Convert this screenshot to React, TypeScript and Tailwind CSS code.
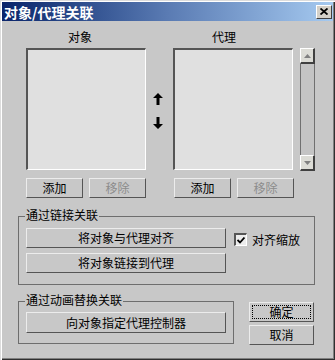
const font = { fontFamily: '"Noto Sans CJK SC", "Noto Sans", sans-serif' }

function Btn({ w, h, label, disabled, focus }: { w: string; h: string; label: string; disabled?: boolean; focus?: boolean }) {
  return (
    <div
      className={`${w} ${h} relative flex items-center justify-center border-t border-l border-t-[#ececec] border-l-[#ececec] border-b border-r border-b-[#555] border-r-[#555] bg-[#c8c8c8] text-[12px] leading-[12px] ${disabled ? 'text-[#8c8c8c]' : 'text-black'}`}
    >
      {focus && <div className="absolute inset-[2px] border border-dotted border-black" />}
      <span className="relative">{label}</span>
    </div>
  )
}

function ListBox() {
  return <div className="w-[120px] h-[122px] bg-[#e0e0e0] border-t-2 border-l-2 border-t-[#555] border-l-[#555] border-b border-r border-b-white border-r-white" />
}

function ScrollBtn({ down }: { down?: boolean }) {
  return (
    <div className="w-[15px] h-[16px] flex items-center justify-center bg-[#dcdcd6] border-t border-l border-t-white border-l-white border-b-2 border-r-2 border-b-[#404040] border-r-[#404040]">
      <svg width="7" height="4" viewBox="0 0 7 4">
        {down ? <polygon points="0,0 7,0 3.5,4" fill="#808080" /> : <polygon points="3.5,0 7,4 0,4" fill="#808080" />}
      </svg>
    </div>
  )
}

function Group({ w, h, label, children }: { w: string; h: string; label: string; children: React.ReactNode }) {
  return (
    <div className={`${w} ${h} relative border border-[#6e6e6e]`}>
      <span className="absolute left-[6px] top-[-9px] px-[1px] bg-[#c8c8c8] text-[12px] leading-[14px]">{label}</span>
      {children}
    </div>
  )
}

export default function App() {
  return (
    <div
      className="w-[335px] h-[360px] p-[2px] bg-[#c8c8c8] text-black shadow-[inset_1px_1px_0_#dcdcdc,inset_2px_2px_0_#fff,inset_-1px_-1px_0_#303030,inset_-2px_-2px_0_#808080]"
      style={font}
    >
      <div className="h-[19px] flex items-center justify-between bg-linear-to-r from-[#0a246a] via-[#5a7bb3] to-[#a6caf0]">
        <span className="pl-[2px] text-white font-bold text-[14px] leading-[16px]">对象/代理关联</span>
        <div className="mr-[1px] w-[16px] h-[14px] flex items-center justify-center bg-[#d4d0c8] border-t border-l border-t-white border-l-white border-b border-r border-b-[#404040] border-r-[#404040]">
          <svg width="8" height="7" viewBox="0 0 8 7">
            <path d="M0.5 0.5 L7.5 6.5 M7.5 0.5 L0.5 6.5" stroke="black" strokeWidth="1.8" />
          </svg>
        </div>
      </div>

      <div className="h-[27px] pt-[10px] flex text-[12px] leading-[12px]">
        <span className="ml-[66px] w-[24px]">对象</span>
        <span className="ml-[120px]">代理</span>
      </div>

      <div className="flex items-start ml-[24px]">
        <ListBox />
        <div className="w-[27px] h-[122px] flex flex-col pl-[7px] pt-[45px] gap-[12px]">
          <svg width="10" height="12" viewBox="0 0 10 12">
            <polygon points="5,0 10,5 6.5,5 6.5,12 3.5,12 3.5,5 0,5" fill="black" />
          </svg>
          <svg width="10" height="12" viewBox="0 0 10 12">
            <polygon points="5,12 10,7 6.5,7 6.5,0 3.5,0 3.5,7 0,7" fill="black" />
          </svg>
        </div>
        <ListBox />
        <div className="ml-[7px] w-[15px] h-[123px] flex flex-col">
          <ScrollBtn />
          <div className="flex-1 border-l border-r border-[#707070] bg-[#c4c4c4]" />
          <ScrollBtn down />
        </div>
      </div>

      <div className="mt-[7px] ml-[24px] flex">
        <Btn w="w-[57px]" h="h-[20px]" label="添加" />
        <div className="ml-[6px]"><Btn w="w-[57px]" h="h-[20px]" label="移除" disabled /></div>
        <div className="ml-[28px]"><Btn w="w-[57px]" h="h-[20px]" label="添加" /></div>
        <div className="ml-[6px]"><Btn w="w-[57px]" h="h-[20px]" label="移除" disabled /></div>
      </div>

      <div className="mt-[18px] ml-[16px]">
        <Group w="w-[297px]" h="h-[69px]" label="通过链接关联">
          <div className="pt-[11px] pl-[7px] flex items-start">
            <div className="flex flex-col gap-[5px]">
              <Btn w="w-[200px]" h="h-[20px]" label="将对象与代理对齐" />
              <Btn w="w-[200px]" h="h-[20px]" label="将对象链接到代理" />
            </div>
            <div className="ml-[8px] mt-[5px] flex items-center">
              <div className="w-[13px] h-[13px] flex items-center justify-center bg-[#ececec] border-t-2 border-l-2 border-t-[#555] border-l-[#555] border-b border-r border-b-white border-r-white">
                <svg width="8" height="7" viewBox="0 0 8 7">
                  <path d="M0.5 3 L3 5.5 L7.5 0.5" stroke="black" strokeWidth="1.8" fill="none" />
                </svg>
              </div>
              <span className="ml-[5px] text-[12px] leading-[12px]">对齐缩放</span>
            </div>
          </div>
        </Group>
      </div>

      <div className="mt-[16px] ml-[16px] flex items-start">
        <Group w="w-[216px]" h="h-[43px]" label="通过动画替换关联">
          <div className="pt-[10px] pl-[7px]">
            <Btn w="w-[200px]" h="h-[21px]" label="向对象指定代理控制器" />
          </div>
        </Group>
        <div className="ml-[15px] mt-[1px] flex flex-col gap-[3px]">
          <Btn w="w-[65px]" h="h-[20px]" label="确定" focus />
          <Btn w="w-[65px]" h="h-[20px]" label="取消" />
        </div>
      </div>
    </div>
  )
}
